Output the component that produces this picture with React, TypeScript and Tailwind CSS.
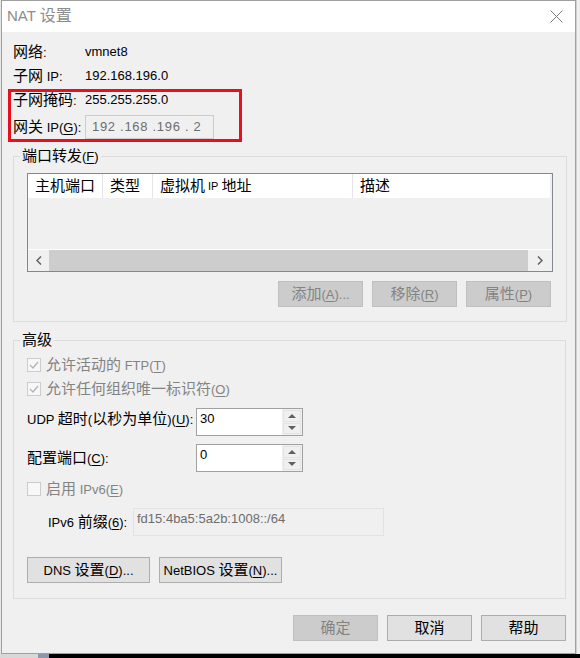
import type { ReactNode } from "react";

const font = {
  fontFamily: '"Liberation Sans", "Noto Sans CJK SC", sans-serif',
};

// CJK runs are drawn a little larger than the latin text, like YaHei on Windows
function J({ children, size = "text-[15px]" }: { children: string; size?: string }) {
  const parts = children.split(/([\u3000-\u9fff\uff00-\uffef]+)/);
  return (
    <>
      {parts.map((p, i) =>
        i % 2 ? (
          <span key={i} className={`${size} leading-[16px]`}>
            {p}
          </span>
        ) : (
          p
        ),
      )}
    </>
  );
}

function Key({ k }: { k: string }) {
  return (
    <>
      (<span className="underline underline-offset-2">{k}</span>)
    </>
  );
}

function Btn({
  children,
  disabled,
  w = "w-[85px]",
}: {
  children: ReactNode;
  disabled?: boolean;
  w?: string;
}) {
  return (
    <div
      className={`${w} h-[26px] flex items-center justify-center border text-[13px] leading-[16px] ${
        disabled
          ? "bg-[#cccccc] border-[#bfbfbf] text-[#838383]"
          : "bg-[#e1e1e1] border-[#adadad] text-black"
      }`}
    >
      <span>{children}</span>
    </div>
  );
}

function Check({ checked, label }: { checked?: boolean; label: ReactNode }) {
  return (
    <div className="h-[24px] flex items-center gap-[5px]">
      <div className="w-[14px] h-[14px] border border-[#cccccc] bg-[#f7f7f7] flex items-center justify-center">
        {checked && (
          <svg width="10" height="10" viewBox="0 0 10 10">
            <path d="M1 5 L4 8 L9 2" stroke="#b4b4b4" strokeWidth="1.3" fill="none" />
          </svg>
        )}
      </div>
      <span className="text-[13px] leading-[16px] text-[#838383]">{label}</span>
    </div>
  );
}

function Spin({ value }: { value: string }) {
  return (
    <div className="w-[107px] h-[28px] border border-[#a0a0a0] bg-white flex">
      <div className="flex-1 pl-[3px] pt-[1px] text-[13px] leading-[18px]">{value}</div>
      <div className="w-[20px] flex flex-col gap-[1px] p-[1px] bg-[#f0f0f0]">
        <div className="flex-1 border border-[#e3e3e3] flex items-center justify-center">
          <svg width="8" height="5" viewBox="0 0 8 5">
            <path d="M0 5 L4 1 L8 5 Z" fill="#606060" />
          </svg>
        </div>
        <div className="flex-1 border border-[#e3e3e3] flex items-center justify-center">
          <svg width="8" height="5" viewBox="0 0 8 5">
            <path d="M0 0 L8 0 L4 4 Z" fill="#606060" />
          </svg>
        </div>
      </div>
    </div>
  );
}

function Group({
  title,
  className,
  children,
}: {
  title: ReactNode;
  className?: string;
  children: ReactNode;
}) {
  return (
    <fieldset className={`w-[553px] border border-[#dcdcdc] px-[13px] ${className ?? ""}`}>
      <legend className="-ml-[7px] px-[2px] h-[16px] text-[13px] leading-[16px]">{title}</legend>
      {children}
    </fieldset>
  );
}

export default function App() {
  return (
    <div className="w-[580px] h-[658px] bg-[#e6e6e6] text-black" style={font}>
      <div className="flex">
        <div className="ml-[1px] w-[575px] h-[654px] border border-[#a0a0a0] bg-[#f0f0f0] flex flex-col relative">
          {/* title bar */}
          <div className="h-[31px] bg-white flex items-center justify-between pl-[5px] pr-[12px]">
            <span className="text-[15px] text-[#8c8c8c] -mt-[1px]">
              <J size="text-[16px]">NAT 设置</J>
            </span>
            <svg width="13" height="13" viewBox="0 0 13 13">
              <path d="M0.5 0.5 L12.5 12.5 M12.5 0.5 L0.5 12.5" stroke="#7a7a7a" strokeWidth="1" />
            </svg>
          </div>

          <div className="pl-[11px] pt-[8px] text-[13px] leading-[16px]">
            <div className="h-[24px] flex items-center">
              <span className="w-[72px]">
                <J>网络:</J>
              </span>
              <span>vmnet8</span>
            </div>
            <div className="h-[24px] flex items-center">
              <span className="w-[72px]">
                <J>子网 IP:</J>
              </span>
              <span>192.168.196.0</span>
            </div>
            <div className="h-[24px] flex items-center">
              <span className="w-[72px]">
                <J>子网掩码:</J>
              </span>
              <span>255.255.255.0</span>
            </div>
            <div className="h-[30px] flex items-center">
              <span className="w-[72px]">
                <J>网关 IP</J>
                <Key k="G" />:
              </span>
              <div className="w-[129px] h-[24px] border border-[#cccccc] bg-[#f0f0f0] flex items-center pl-[6px] text-[#6d6d6d] tracking-[0.7px]">
                192 .168 .196 . 2
              </div>
            </div>

            {/* port forwarding */}
            <Group
              className="mt-[6px] pb-[14px]"
              title={
                <>
                  <J>端口转发</J>
                  <Key k="F" />
                </>
              }
            >
              <div className="mt-[9px] w-[526px] h-[99px] border border-[#828790] flex flex-col">
                <div className="h-[24px] bg-white flex text-[13px]">
                  <div className="w-[75px] pl-[7px] flex items-center border-r border-[#e5e5e5]">
                    <J>主机端口</J>
                  </div>
                  <div className="w-[50px] pl-[7px] flex items-center border-r border-[#e5e5e5]">
                    <J>类型</J>
                  </div>
                  <div className="w-[200px] pl-[7px] flex items-center border-r border-[#e5e5e5] gap-[3px]">
                    <J>虚拟机</J>
                    <span className="text-[11px]">IP</span>
                    <J>地址</J>
                  </div>
                  <div className="flex-1 pl-[7px] flex items-center">
                    <J>描述</J>
                  </div>
                  <div className="w-[2px] bg-[#f0f0f0]" />
                </div>
                <div className="flex-1" />
                <div className="h-[1px] bg-white" />
                <div className="h-[21px] flex">
                  <div className="w-[21px] flex items-center justify-center">
                    <svg width="6" height="9" viewBox="0 0 6 9">
                      <path d="M5 0.5 L1 4.5 L5 8.5" stroke="#606060" strokeWidth="1.5" fill="none" />
                    </svg>
                  </div>
                  <div className="flex-1 bg-[#cdcdcd]" />
                  <div className="w-[24px] flex items-center justify-center">
                    <svg width="6" height="9" viewBox="0 0 6 9">
                      <path d="M1 0.5 L5 4.5 L1 8.5" stroke="#606060" strokeWidth="1.5" fill="none" />
                    </svg>
                  </div>
                </div>
              </div>
              <div className="mt-[9px] w-[524px] flex justify-end gap-[9px]">
                <Btn disabled>
                  <J>添加</J>
                  <Key k="A" />...
                </Btn>
                <Btn disabled>
                  <J>移除</J>
                  <Key k="R" />
                </Btn>
                <Btn disabled>
                  <J>属性</J>
                  <Key k="P" />
                </Btn>
              </div>
            </Group>

            {/* advanced */}
            <Group className="mt-[10px] pb-[15px]" title={<J>高级</J>}>
              <div className="mt-[5px]">
                <Check
                  checked
                  label={
                    <>
                      <J>允许活动的 FTP</J>
                      <Key k="T" />
                    </>
                  }
                />
                <Check
                  checked
                  label={
                    <>
                      <J>允许任何组织唯一标识符</J>
                      <Key k="O" />
                    </>
                  }
                />
              </div>
              <div className="mt-[7px] h-[28px] flex items-center text-[13px]">
                <span className="w-[169px] -mt-[5px]">
                  <J>UDP 超时(以秒为单位)</J>
                  <Key k="U" />:
                </span>
                <Spin value="30" />
              </div>
              <div className="mt-[8px] h-[28px] flex items-center text-[13px]">
                <span className="w-[169px]">
                  <J>配置端口</J>
                  <Key k="C" />:
                </span>
                <Spin value="0" />
              </div>
              <div className="mt-[5px]">
                <Check
                  label={
                    <>
                      <J>启用 IPv6</J>
                      <Key k="E" />
                    </>
                  }
                />
              </div>
              <div className="mt-[7px] h-[28px] flex items-center text-[13px] pl-[21px]">
                <span className="w-[85px]">
                  <J>IPv6 前缀</J>
                  <Key k="6" />:
                </span>
                <div className="w-[251px] h-[28px] border border-[#e3e3e3] bg-[#f0f0f0] pl-[3px] pt-[1px] text-[#6d6d6d] leading-[18px]">
                  fd15:4ba5:5a2b:1008::/64
                </div>
              </div>
              <div className="mt-[21px] flex gap-[9px]">
                <Btn w="w-[123px]">
                  <J>DNS 设置</J>
                  <Key k="D" />...
                </Btn>
                <Btn w="w-[123px]">
                  <J>NetBIOS 设置</J>
                  <Key k="N" />...
                </Btn>
              </div>
            </Group>

            <div className="mt-[16px] w-[553px] flex justify-end gap-[9px]">
              <Btn disabled>
                <J>确定</J>
              </Btn>
              <Btn>
                <J>取消</J>
              </Btn>
              <Btn>
                <J>帮助</J>
              </Btn>
            </div>
          </div>

          {/* annotation frame */}
          <div className="absolute left-[6px] top-[88px] w-[234px] h-[53px] border-[3px] border-[#e8101e] pointer-events-none" />
        </div>
        <div className="flex-1 bg-[#f0f0f0] border-l border-[#d0d0d0]" />
      </div>
      <div className="h-[4px] flex">
        <div className="w-[38px] bg-[#d8d8d8]" />
        <div className="w-[11px] bg-[#8f98aa]" />
        <div className="flex-1 bg-black" />
      </div>
    </div>
  );
}
